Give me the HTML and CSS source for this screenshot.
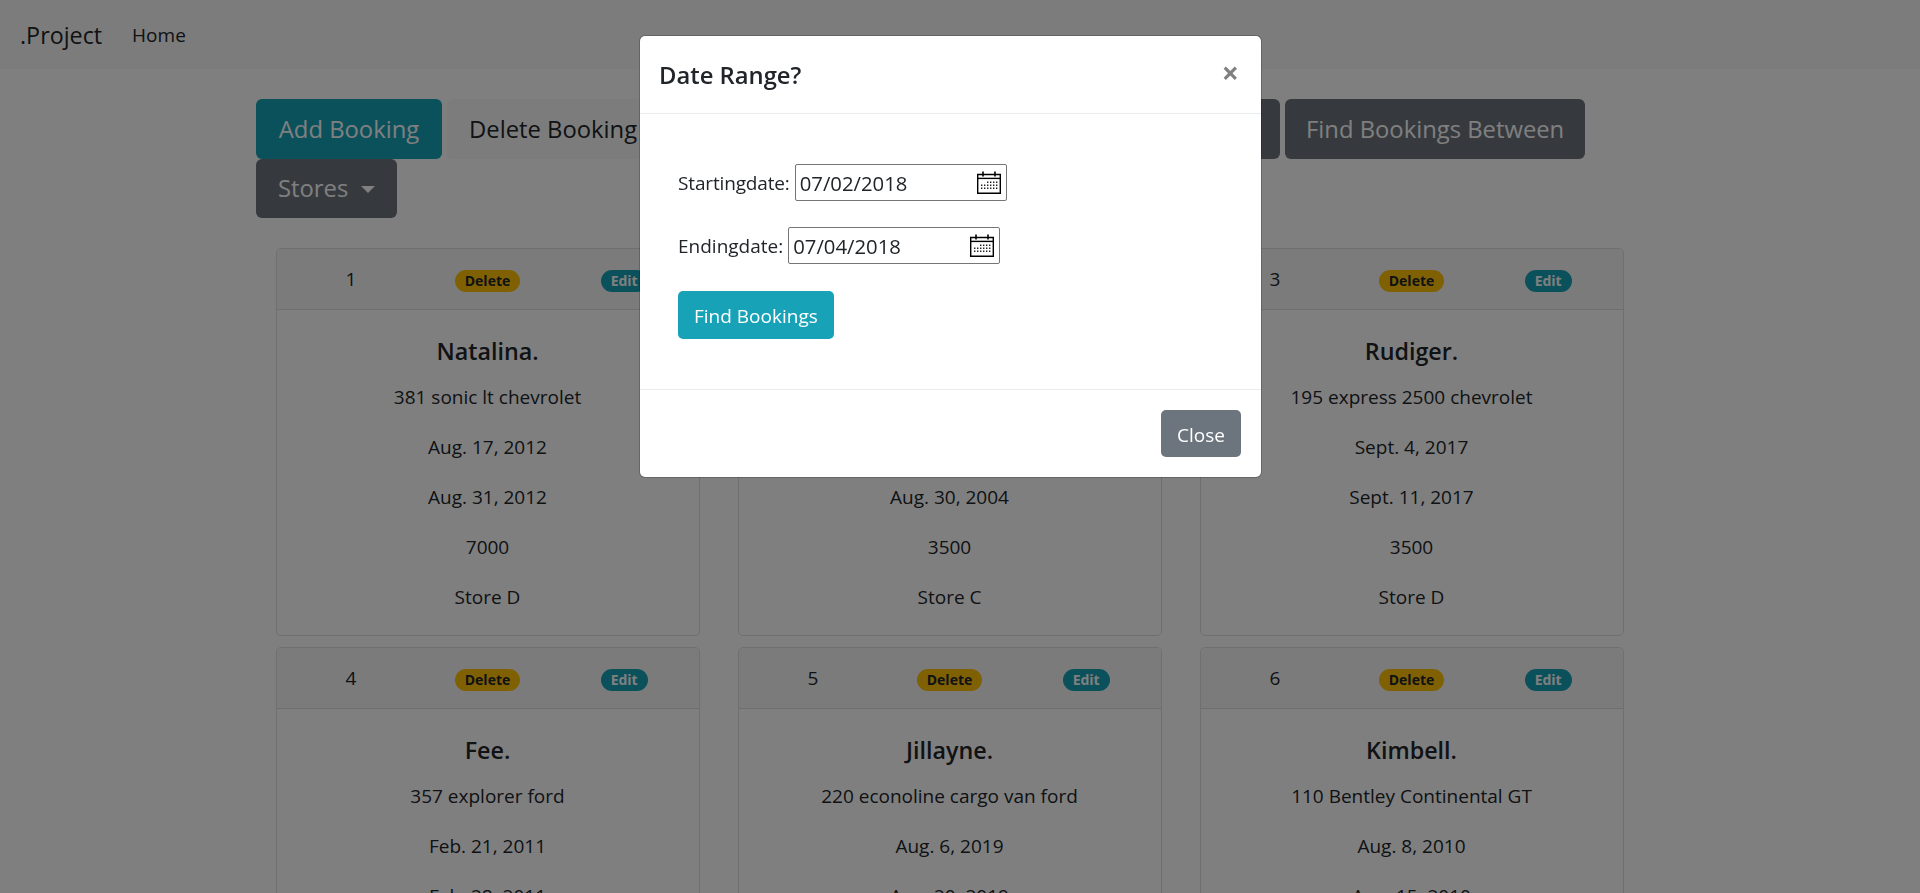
FILE: index.html
```html
<!DOCTYPE html>
<html lang="en">
<head>
  <meta charset="UTF-8">
  <meta name="viewport" content="width=device-width, initial-scale=1.0">
  <title>Bookings</title>
  <link rel="stylesheet" href="styles.css">
</head>
<body>
  <nav class="navbar">
    <a class="brand">.Project</a>
    <a class="navLink">Home</a>
  </nav>

  <div class="container">
    <div class="actions">
      <button class="btn btnLg btnInfo btnAdd">Add Booking</button>
      <button class="btn btnLg btnLight">Delete Booking</button>
      <button class="btn btnLg btnDark btnHidden"></button>
      <button class="btn btnLg btnDark btnBetween">Find Bookings Between</button>
      <button class="btn btnLg btnDark">Stores <span class="caret"></span></button>
    </div>

    <div class="cards">
      <div class="card">
        <div class="cardHeader"><span>1</span><span><b class="badge badgeWarning">Delete</b></span><span><b class="badge badgeInfo">Edit</b></span></div>
        <div class="cardBody">
          <h5>Natalina.</h5>
          <p>381 sonic lt chevrolet</p>
          <p>Aug. 17, 2012</p>
          <p>Aug. 31, 2012</p>
          <p>7000</p>
          <p>Store D</p>
        </div>
      </div>
      <div class="card">
        <div class="cardHeader"><span>2</span><span><b class="badge badgeWarning">Delete</b></span><span><b class="badge badgeInfo">Edit</b></span></div>
        <div class="cardBody">
          <h5>&nbsp;</h5>
          <p>&nbsp;</p>
          <p>&nbsp;</p>
          <p>Aug. 30, 2004</p>
          <p>3500</p>
          <p>Store C</p>
        </div>
      </div>
      <div class="card">
        <div class="cardHeader"><span>3</span><span><b class="badge badgeWarning">Delete</b></span><span><b class="badge badgeInfo">Edit</b></span></div>
        <div class="cardBody">
          <h5>Rudiger.</h5>
          <p>195 express 2500 chevrolet</p>
          <p>Sept. 4, 2017</p>
          <p>Sept. 11, 2017</p>
          <p>3500</p>
          <p>Store D</p>
        </div>
      </div>
      <div class="card">
        <div class="cardHeader"><span>4</span><span><b class="badge badgeWarning">Delete</b></span><span><b class="badge badgeInfo">Edit</b></span></div>
        <div class="cardBody">
          <h5>Fee.</h5>
          <p>357 explorer ford</p>
          <p>Feb. 21, 2011</p>
          <p>Feb. 28, 2011</p>
        </div>
      </div>
      <div class="card">
        <div class="cardHeader"><span>5</span><span><b class="badge badgeWarning">Delete</b></span><span><b class="badge badgeInfo">Edit</b></span></div>
        <div class="cardBody">
          <h5>Jillayne.</h5>
          <p>220 econoline cargo van ford</p>
          <p>Aug. 6, 2019</p>
          <p>Aug. 20, 2019</p>
        </div>
      </div>
      <div class="card">
        <div class="cardHeader"><span>6</span><span><b class="badge badgeWarning">Delete</b></span><span><b class="badge badgeInfo">Edit</b></span></div>
        <div class="cardBody">
          <h5>Kimbell.</h5>
          <p>110 Bentley Continental GT</p>
          <p>Aug. 8, 2010</p>
          <p>Aug. 15, 2010</p>
        </div>
      </div>
    </div>
  </div>

  <div class="backdrop"></div>

  <div class="modal">
    <div class="modalHeader">
      <h5 class="modalTitle">Date Range?</h5>
      <span class="closeX">&times;</span>
    </div>
    <div class="modalBody">
      <div class="field">
        <label class="labelStart">Startingdate:</label>
        <div class="dateInput">
          <span>07/02/2018</span>
          <svg class="calIcon" viewBox="0 0 24 23"><use href="#cal"></use></svg>
        </div>
      </div>
      <div class="field">
        <label>Endingdate:</label>
        <div class="dateInput">
          <span>07/04/2018</span>
          <svg class="calIcon" viewBox="0 0 24 23"><use href="#cal"></use></svg>
        </div>
      </div>
      <button class="btn btnInfo btnFind">Find Bookings</button>
    </div>
    <div class="modalFooter">
      <button class="btn btnSecondary">Close</button>
    </div>
  </div>

  <svg class="iconDefs" width="0" height="0">
    <symbol id="cal" viewBox="0 0 24 23">
      <path d="M.7 3.5h22.6v18.8H.7z" fill="none" stroke="#000" stroke-width="1.4"/>
      <path d="M.7 7.4h22.6" stroke="#000" stroke-width="1.4"/>
      <path d="M6 .5v5M18 .5v5" stroke="#000" stroke-width="1.6"/>
      <path d="M10 10.5h1.4v1.4H10zM13 10.5h1.4v1.4H13zM16 10.5h1.4v1.4H16zM19 10.5h1.4v1.4H19zM4 13.5h1.4v1.4H4zM7 13.5h1.4v1.4H7zM10 13.5h1.4v1.4H10zM13 13.5h1.4v1.4H13zM16 13.5h1.4v1.4H16zM19 13.5h1.4v1.4H19zM4 16.5h1.4v1.4H4zM7 16.5h1.4v1.4H7zM10 16.5h1.4v1.4H10zM13 16.5h1.4v1.4H13zM16 16.5h1.4v1.4H16zM19 16.5h1.4v1.4H19z" fill="#222"/>
    </symbol>
  </svg>
</body>
</html>
```

FILE: styles.css
```css
body{
  margin: 0;
  height: 100vh;
  overflow: hidden;
  background: #fff;
  color: #212529;
  font-family: 'Open Sans', sans-serif;
  font-size: 19px;
  line-height: 30px;
}

.navbar{
  height: 69px;
  display: flex;
  align-items: center;
  padding: 0 20px;
  background: #f8f9fa;
}

.brand{
  font-size: 23.3px;
  margin-right: 30px;
}

.navLink{
  color: #212529;
}

.container{
  width: 1408px;
  margin: 30px 0 0 256px;
}

.actions{
  display: flex;
  flex-wrap: wrap;
  column-gap: 5px;
}

.btn{
  border: 1px solid transparent;
  border-radius: 5px;
  font-family: inherit;
  font-size: 19px;
  line-height: 30px;
  padding: 8px 15px 6px;
  color: #fff;
}

.btnLg{
  height: 59.5px;
  padding: 0 21px;
  font-size: 23.8px;
  border-radius: 6px;
}

.btnInfo{
  background: #17a2b8;
}

.btnAdd{
  width: 186px;
}

.btnLight{
  background: #f8f9fa;
  color: #212529;
}

.btnDark{
  background: #6c757d;
}

.btnSecondary{
  background: #6c757d;
}

.btnHidden{
  width: 616px;
}

.btnBetween{
  padding: 0 20px;
}

.caret{
  display: inline-block;
  margin-left: 7px;
  vertical-align: 4px;
  border-top: 7px solid #fff;
  border-left: 7px solid transparent;
  border-right: 7px solid transparent;
}

.cards{
  display: grid;
  grid-template-columns: repeat(3, 424px);
  column-gap: 38px;
  row-gap: 11px;
  margin: 30px 0 0 19.5px;
}

.card{
  border: 1px solid #dfdfdf;
  border-radius: 5px;
}

.cardHeader{
  display: grid;
  grid-template-columns: repeat(3, 1fr);
  padding: 15px 6px;
  text-align: center;
  background: #f7f7f7;
  border-bottom: 1px solid #dfdfdf;
  border-radius: 5px 5px 0 0;
}

.badge{
  display: inline-block;
  padding: 0 10px;
  font-size: 14px;
  line-height: 22px;
  font-weight: 700;
  border-radius: 12px;
}

.badgeWarning{
  background: #ffc107;
  color: #212529;
}

.badgeInfo{
  background: #17a2b8;
  color: #fff;
}

.cardBody{
  padding: 25px 25px 23px;
  text-align: center;
}

.cardBody h5{
  margin: 1px 0 16px;
  font-size: 23.3px;
  line-height: 30px;
  font-weight: 600;
}

.cardBody p{
  margin: 0 0 20px;
}

.cardBody p:last-child{
  margin-bottom: 0;
}

.backdrop{
  position: fixed;
  inset: 0;
  background: rgba(0, 0, 0, .5);
}

.modal{
  position: fixed;
  top: 35px;
  left: 639px;
  width: 623px;
  box-sizing: border-box;
  background: #fff;
  border: 1px solid rgba(0, 0, 0, .2);
  border-radius: 6px;
  background-clip: padding-box;
}

.modalHeader{
  height: 77px;
  display: flex;
  align-items: center;
  justify-content: space-between;
  padding: 0 20px 0 19px;
  border-bottom: 1px solid #e9ecef;
}

.modalTitle{
  margin: 0;
  font-size: 23.8px;
  font-weight: 600;
}

.closeX{
  font-size: 30px;
  font-weight: 700;
  color: #808080;
  margin: -4px 2px 0 0;
}

.modalBody{
  display: flex;
  flex-direction: column;
  align-items: flex-start;
  padding: 50px 38px 50px;
}

.field{
  display: flex;
  align-items: center;
  gap: 5px;
  margin-bottom: 26px;
}

.field + .field{
  margin-bottom: 27px;
}

.labelStart{
  letter-spacing: -.15px;
}

.dateInput{
  width: 212px;
  height: 37px;
  box-sizing: border-box;
  display: flex;
  align-items: center;
  justify-content: space-between;
  padding: 0 5px 0 4px;
  border: 1px solid #767676;
  border-radius: 2px;
  font-size: 20.3px;
}

.calIcon{
  width: 24px;
  height: 23px;
}

.btnFind{
  height: 48px;
}

.modalFooter{
  display: flex;
  justify-content: flex-end;
  padding: 20px;
  border-top: 1px solid #e9ecef;
}

.btnSecondary{
  height: 47px;
}

.iconDefs{
  position: absolute;
}
```
